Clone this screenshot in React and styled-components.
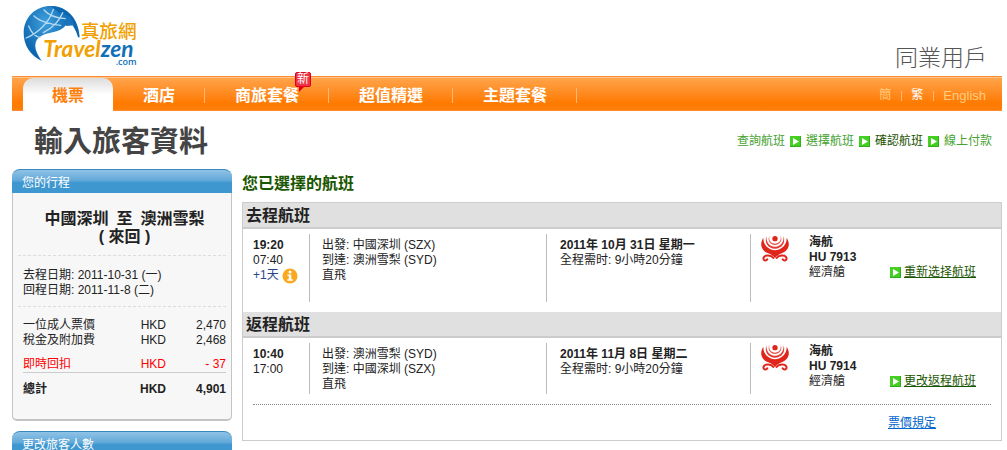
import React from "react";
import styled, { createGlobalStyle } from "styled-components";

const GlobalStyle = createGlobalStyle`
  html {
    scrollbar-width: none;
  }

  body {
    margin: 0;
    background: #fff;
    color: #222;
    font-family: "Liberation Sans", "Noto Sans CJK TC", sans-serif;
    font-size: 12px;
    line-height: 15px;
  }
`;

const Page = styled.div`
  padding: 0 5px 0 12px;
`;

const Header = styled.header`
  display: flex;
  justify-content: space-between;
  height: 74px;
  padding: 2px 15px 0 8px;
`;

const UserType = styled.div`
  align-self: flex-end;
  padding-bottom: 6px;
  font-size: 23px;
  font-weight: 300;
  line-height: 24px;
  color: #555;
`;

const NavBar = styled.nav`
  display: flex;
  justify-content: space-between;
  box-sizing: border-box;
  height: 35px;
  padding: 0 16px 0 11px;
  border: 1px solid #ff8c33;
  border-width: 1px 0;
  background: linear-gradient(#ffa64d, #ff8a1f 50%, #ff7a00 80%, #ff7f0a);
  box-shadow: inset 0 1px 0 #ffc48c;
`;

const Tabs = styled.div`
  display: flex;
  align-items: center;
  padding-top: 4px;
`;

const Tab = styled.a`
  position: relative;
  box-sizing: border-box;
  padding: 0 29px 0 30px;
  border-right: 1px solid #ffb873;
  color: #fff;
  font-size: 16px;
  font-weight: bold;
  line-height: 15px;
  text-decoration: none;
`;

const ActiveTab = styled.a`
  align-self: flex-end;
  margin: -4px 0 -1px;
  padding: 2px 29px 0;
  border-radius: 10px 10px 0 0;
  background: linear-gradient(#dcdcdc, #fff 50%);
  color: #ff7f0a;
  font-size: 16px;
  font-weight: bold;
  line-height: 31px;
  text-decoration: none;
`;

const NewBadge = styled.span`
  position: absolute;
  top: -16px;
  right: 17px;
  padding: 0 1px;
  border: 1px solid #e0001a;
  border-radius: 2px;
  background: #ee3344;
  font-size: 12px;
  font-weight: normal;
  line-height: 13px;

  &::after {
    content: "";
    position: absolute;
    top: 13px;
    left: 3px;
    border: 3px solid transparent;
    border-top-color: #e0001a;
    border-left-color: #e0001a;
  }
`;

const Languages = styled.div`
  display: flex;
  align-items: center;
  gap: 10px;
  padding-top: 4px;
`;

const Language = styled.a`
  color: ${(props) => (props.$active ? "#fff" : "#ffcc80")};
  font-size: ${(props) => (props.$latin ? "13px" : "12px")};
  text-decoration: none;

  & + & {
    padding-left: 10px;
    background: linear-gradient(#ffb873, #ffb873) left center / 1px 10px
      no-repeat;
  }
`;

const TitleRow = styled.div`
  display: flex;
  align-items: center;
  justify-content: space-between;
  padding: 15px 10px 11px 22px;
`;

const PageTitle = styled.h1`
  margin: 0;
  font-size: 29px;
  font-weight: bold;
  line-height: 32px;
  color: #444;
`;

const Steps = styled.ol`
  display: flex;
  align-items: center;
  gap: 5px;
  margin: 0;
  padding: 0 0 2px;
  list-style: none;
`;

const Step = styled.li`
  display: flex;
  align-items: center;
  gap: 5px;
  color: ${(props) => (props.$active ? "#1a5200" : "#44a22f")};
`;

const Columns = styled.div`
  display: flex;
  align-items: flex-start;
  gap: 10px;
`;

const Sidebar = styled.aside`
  flex: 0 0 220px;
`;

const Card = styled.section`
  margin-bottom: 10px;
`;

const CardTitle = styled.h2`
  margin: 0;
  padding: 3px 10px 0;
  border-top: 1px solid #3a87bd;
  border-radius: 8px 8px 0 0;
  background: linear-gradient(#8fc3e6, #62a9d9 45%, #3f97d0 55%, #3f97d0);
  color: #fff;
  font-size: 12px;
  font-weight: normal;
  line-height: 20px;
`;

const CardBody = styled.div`
  padding: 17px 5px 22px;
  border: 1px solid #c4c4c4;
  border-width: 0 1px 2px;
  border-radius: 0 0 5px 5px;
  background: #f7f7f7;
`;

const Route = styled.h3`
  margin: 0;
  padding: 0 0 9px 5px;
  font-size: 16px;
  line-height: 18px;
  text-align: center;
  word-break: keep-all;
`;

const City = styled.span`
  margin: 0 8px;
`;

const Dates = styled.div`
  padding: 12px 5px 8px;
  border: 1px dashed #ddd;
  border-width: 1px 0;
`;

const PriceTable = styled.table`
  width: 100%;
  margin-top: 11px;
  padding-left: 5px;
  border-spacing: 0;
`;

const PriceRow = styled.tr`
  color: ${(props) => (props.$discount ? "#f00" : "inherit")};
  font-weight: ${(props) => (props.$total ? "bold" : "normal")};

  th,
  td {
    padding: ${(props) => (props.$discount || props.$total ? "9px 0 0" : "0")};
    border-bottom: ${(props) => (props.$discount ? "1px solid #ccc" : "none")};
    font-weight: inherit;
    text-align: right;
  }

  th {
    text-align: left;
  }

  td:last-child {
    width: 60px;
  }
`;

const Main = styled.main`
  flex: 1;
`;

const MainTitle = styled.h2`
  margin: 5px 0 8px;
  color: #1a5600;
  font-size: 16px;
  line-height: 20px;
`;

const FlightBox = styled.div`
  border: 1px solid #ccc;
`;

const LegTitle = styled.h3`
  margin: 0;
  padding: 1px 3px 0;
  border-bottom: 2px solid #ccc;
  background: #e0e0e0;
  font-size: 16px;
  line-height: 23px;
`;

const Leg = styled.div`
  display: grid;
  grid-template-columns: 57px 237fr 204fr 58px 81px 101px;
  padding: 5px 10px 10px;
`;

const Cell = styled.div`
  padding: 4px 0 2px ${(props) => props.$indent || 0}px;
  border-right: ${(props) => (props.$divider ? "1px solid #bbb" : "none")};
`;

const AirlineCell = styled.div`
  padding: ${(props) => (props.$logo ? "0 0 0 10px" : "1px 0 0")};
`;

const ExtraDay = styled.div`
  display: flex;
  align-items: center;
  gap: 3px;
  height: 15px;
  margin-bottom: 17px;
  color: #2a4590;
`;

const ChangeCell = styled.div`
  display: flex;
  align-items: center;
  gap: 3px;
  height: 15px;
  padding-top: 31px;
`;

const ChangeLink = styled.a`
  color: #1a5600;
`;

const Rules = styled.div`
  display: flex;
  justify-content: flex-end;
  margin: 0 10px;
  padding: 11px 55px 9px 0;
  border-top: 1px dotted #888;
`;

const RulesLink = styled.a`
  color: #0066cc;
`;

const Logo = () => (
  <svg width="120" height="66" viewBox="0 0 360 198" role="img">
    <defs>
      <radialGradient id="globe" cx="0.5" cy="0.3" r="0.6">
        <stop offset="0" stopColor="#3f9fdc" />
        <stop offset="1" stopColor="#0c66b0" />
      </radialGradient>
    </defs>
    <path
      d="M66 177C30 162 10 126 11 90C13 44 48 12 92 12C124 12 142 34 142 54C142 64 138 70 132 76C118 88 102 90 86 94C58 100 45 112 46 134C48 152 58 166 66 177Z"
      fill="url(#globe)"
    />
    <path
      d="M92 12C144 12 176 52 179 106L174 106C168 82 154 60 134 46Z"
      fill="#0c66b0"
    />
    <path
      d="M138 56C154 62 166 82 171 104C164 92 154 80 140 70Z"
      fill="#fff"
    />
    <path d="M120 30L150 44L164 70L138 72Z" fill="#1a74bb" />
    <path
      d="M18 108C52 94 88 62 100 22M42 42C54 54 88 68 122 70M26 72C34 92 46 104 60 106M72 24C84 38 108 48 136 50M70 92C96 78 118 58 128 32"
      fill="none"
      stroke="#b4daf2"
      strokeWidth="4"
      strokeLinecap="round"
    />
    <text
      x="182"
      y="108"
      fill="#f0a000"
      fontFamily="'Noto Sans CJK TC', sans-serif"
      fontSize="56"
      fontWeight="500"
    >
      真旅網
    </text>
    <text
      x="70"
      y="166"
      fill="#f0a000"
      fontFamily="Lato, sans-serif"
      fontSize="68"
      fontStyle="italic"
      fontWeight="bold"
    >
      Travel<tspan fill="#0f6fb8">zen</tspan>
    </text>
    <text
      x="287"
      y="190"
      fill="#0f6fb8"
      fontFamily="'Open Sans', sans-serif"
      fontSize="27"
      fontWeight="600"
    >
      .com
    </text>
  </svg>
);

const Arrow = () => (
  <svg width="11" height="11" viewBox="0 0 11 11" aria-hidden="true">
    <rect width="11" height="11" fill="#2fae1c" />
    <rect width="10" height="10" fill="#45cf22" />
    <path d="M3 2L9 5.5L3 9Z" fill="#fff" />
  </svg>
);

const InfoIcon = () => (
  <svg width="16" height="16" viewBox="0 0 16 16" aria-hidden="true">
    <circle cx="8" cy="8" r="7.5" fill="#f9a91f" />
    <circle cx="8" cy="4" r="1.5" fill="#fff" />
    <path d="M5.5 6.5H9.3V11.2H10.8V12.8H5.3V11.2H6.8V8H5.5Z" fill="#fff" />
  </svg>
);

const AirlineLogo = () => (
  <svg width="28" height="28" viewBox="0 0 84 84" aria-hidden="true">
    <circle cx="42" cy="14" r="8" fill="#e0251b" />
    <path
      d="M26 4C22 14 26 29 42 29C58 29 62 14 58 4C66 18 58 33 42 33C26 33 18 18 26 4Z"
      fill="#e8564e"
    />
    <path
      d="M17 6C14 22 24 38 42 38C60 38 70 22 67 6C76 26 62 44 42 44C22 44 8 26 17 6Z"
      fill="#e43a31"
    />
    <path
      d="M7 11C6 32 22 48 42 49C62 48 78 32 77 11C90 32 82 49 64 57C54 61 46 66 42 73C38 66 30 61 20 57C2 49 -6 32 7 11Z"
      fill="#e0251b"
    />
    <path
      d="M37 72C30 63 12 62 8 71C5 79 15 83 19 76M47 72C54 63 72 62 76 71C79 79 69 83 65 76"
      fill="none"
      stroke="#e0251b"
      strokeWidth="6"
      strokeLinecap="round"
    />
  </svg>
);

const tabs = [
  { name: "酒店" },
  { name: "商旅套餐", isNew: true },
  { name: "超值精選" },
  { name: "主題套餐" },
];

const steps = ["查詢航班", "選擇航班", "確認航班", "線上付款"];

const prices = [
  { label: "一位成人票價", amount: "2,470" },
  { label: "稅金及附加費", amount: "2,468" },
  { label: "即時回扣", amount: "- 37", discount: true },
  { label: "總計", amount: "4,901", total: true },
];

const legs = [
  {
    title: "去程航班",
    departTime: "19:20",
    arriveTime: "07:40",
    extraDay: "+1天",
    from: "中國深圳 (SZX)",
    to: "澳洲雪梨 (SYD)",
    date: "2011年 10月 31日 星期一",
    flight: "HU 7913",
    change: "重新选择航班",
  },
  {
    title: "返程航班",
    departTime: "10:40",
    arriveTime: "17:00",
    from: "澳洲雪梨 (SYD)",
    to: "中國深圳 (SZX)",
    date: "2011年 11月 8日 星期二",
    flight: "HU 7914",
    change: "更改返程航班",
  },
];

const App = () => {
  return (
    <>
      <GlobalStyle />
      <Page>
        <Header>
          <Logo />
          <UserType>同業用戶</UserType>
        </Header>
        <NavBar>
          <Tabs>
            <ActiveTab href="#">機票</ActiveTab>
            {tabs.map((tab) => (
              <Tab href="#" key={tab.name}>
                {tab.name}
                {tab.isNew && <NewBadge>新</NewBadge>}
              </Tab>
            ))}
          </Tabs>
          <Languages>
            <Language href="#">簡</Language>
            <Language href="#" $active>
              繁
            </Language>
            <Language href="#" $latin>
              English
            </Language>
          </Languages>
        </NavBar>
        <TitleRow>
          <PageTitle>輸入旅客資料</PageTitle>
          <Steps>
            {steps.map((step, index) => (
              <Step key={step} $active={index === 2}>
                {index > 0 && <Arrow />}
                {step}
              </Step>
            ))}
          </Steps>
        </TitleRow>
        <Columns>
          <Sidebar>
            <Card>
              <CardTitle>您的行程</CardTitle>
              <CardBody>
                <Route>
                  <City>中國深圳</City>至<City>澳洲雪梨</City>
                  <br />( 來回 )
                </Route>
                <Dates>
                  去程日期: 2011-10-31 (一)
                  <br />
                  回程日期: 2011-11-8 (二)
                </Dates>
                <PriceTable>
                  <tbody>
                    {prices.map((price) => (
                      <PriceRow
                        key={price.label}
                        $discount={price.discount}
                        $total={price.total}
                      >
                        <th scope="row">{price.label}</th>
                        <td>HKD</td>
                        <td>{price.amount}</td>
                      </PriceRow>
                    ))}
                  </tbody>
                </PriceTable>
              </CardBody>
            </Card>
            <Card>
              <CardTitle>更改旅客人數</CardTitle>
            </Card>
          </Sidebar>
          <Main>
            <MainTitle>您已選擇的航班</MainTitle>
            <FlightBox>
              {legs.map((leg) => (
                <section key={leg.title}>
                  <LegTitle>{leg.title}</LegTitle>
                  <Leg>
                    <Cell $divider>
                      <b>{leg.departTime}</b>
                      <br />
                      {leg.arriveTime}
                      {leg.extraDay && (
                        <ExtraDay>
                          {leg.extraDay}
                          <InfoIcon />
                        </ExtraDay>
                      )}
                    </Cell>
                    <Cell $divider $indent={12}>
                      出發: {leg.from}
                      <br />
                      到達: {leg.to}
                      <br />
                      直飛
                    </Cell>
                    <Cell $divider $indent={13}>
                      <b>{leg.date}</b>
                      <br />
                      全程需时: 9小時20分鐘
                    </Cell>
                    <AirlineCell $logo>
                      <AirlineLogo />
                    </AirlineCell>
                    <AirlineCell>
                      <b>
                        海航
                        <br />
                        {leg.flight}
                      </b>
                      <br />
                      經濟艙
                    </AirlineCell>
                    <ChangeCell>
                      <Arrow />
                      <ChangeLink href="#">{leg.change}</ChangeLink>
                    </ChangeCell>
                  </Leg>
                </section>
              ))}
              <Rules>
                <RulesLink href="#">票價規定</RulesLink>
              </Rules>
            </FlightBox>
          </Main>
        </Columns>
      </Page>
    </>
  );
};

export default App;
